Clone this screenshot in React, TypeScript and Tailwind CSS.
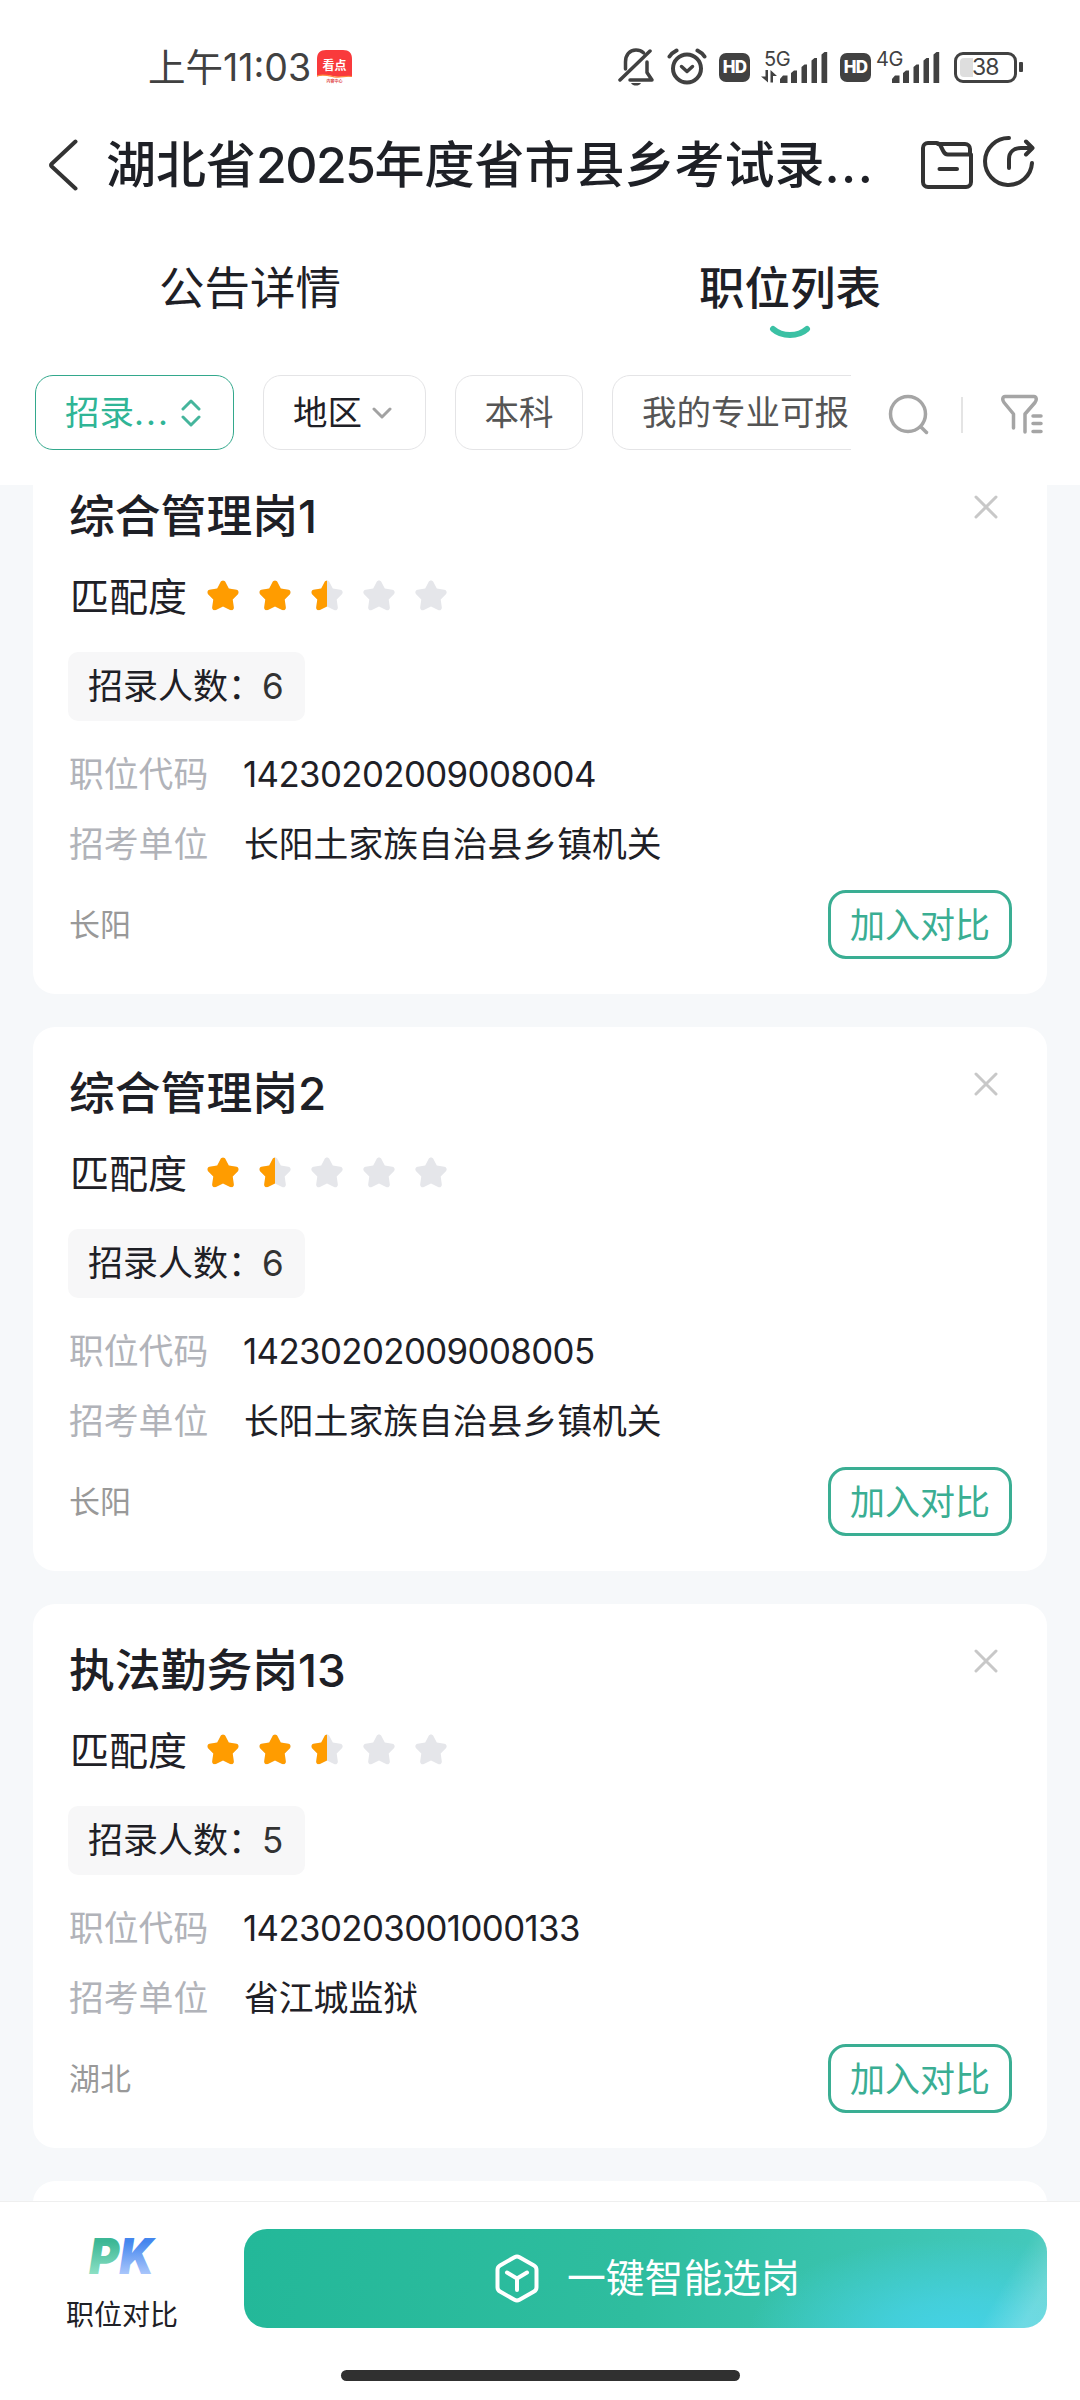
import clsx from "clsx";

type Job = {
	title: string;
	score: number;
	count: number;
	code: string;
	unit: string;
	area: string;
};

const JOBS: Job[] = [
	{
		title: "综合管理岗1",
		score: 2.5,
		count: 6,
		code: "14230202009008004",
		unit: "长阳土家族自治县乡镇机关",
		area: "长阳",
	},
	{
		title: "综合管理岗2",
		score: 1.5,
		count: 6,
		code: "14230202009008005",
		unit: "长阳土家族自治县乡镇机关",
		area: "长阳",
	},
	{
		title: "执法勤务岗13",
		score: 2.5,
		count: 5,
		code: "14230203001000133",
		unit: "省江城监狱",
		area: "湖北",
	},
];

const STAR =
	"M16 .5c1 0 1.900 .5 2.400 1.500l3.400 6.600 7.600 1.200c2.200 .4 3 2.800 1.500 4.400l-5.200 5.400 1.100 7.600c.3 2.200-1.700 3.700-3.700 2.700L16 26.600l-7.100 3.300c-2 1-4-.5-3.700-2.700l1.100-7.600-5.200-5.400C-.4 12.600 .4 10.200 2.600 9.800l7.600-1.200L13.600 2c.5-1 1.400-1.500 2.400-1.500z";

function Star({ fill }: { fill: number }) {
	return (
		<svg width="32" height="32" viewBox="0 0 32 32">
			<path d={STAR} fill="#e5e6ea" />
			{fill > 0 && (
				<path
					d={STAR}
					fill="#ff9c00"
					style={{ clipPath: `inset(0 ${(1 - fill) * 100}% 0 0)` }}
				/>
			)}
		</svg>
	);
}

function Signal() {
	return (
		<svg width="48" height="31" viewBox="0 0 48 31" fill="#414141">
			<path d="M0 31v-4l3-3.500h4.500V31zM11 31V21l3-2.500h3V31zM21.500 31V15l3-2.500h2.500V31zM31.500 31V8.500l3-2.500h2.500V31zM41.500 31V2.500L44.500 0h2.700v31z" />
		</svg>
	);
}

function HdBadge() {
	return (
		<span className="flex h-[29px] w-[31px] items-center justify-center rounded-[7px] bg-[#414141] text-[17px] leading-none font-extrabold tracking-[-0.8px] text-white">
			HD
		</span>
	);
}

function StatusBar() {
	return (
		<div className="flex h-[100px] items-end pl-[148px] text-[#414141]">
			<span className="mb-[7px] h-[50px] w-[162px] text-[37.5px] leading-[50px] whitespace-nowrap">
				上午11:03
			</span>
			<svg
				width="36"
				height="36"
				viewBox="0 0 36 36"
				className="mb-[14px] ml-[7px]"
			>
				<path
					d="M9 0h17c6 0 9 3 9 9v18c-6-2-10 1-17-.5C11 25 6 24 0 26.500V9c0-6 3-9 9-9z"
					fill="#f93a3c"
				/>
				<path
					d="M0 26c6-2 11-.5 17 .8 7 1.200 12-1.500 18-.3"
					stroke="#ff8a3c"
					strokeWidth="1.200"
					fill="none"
				/>
				<text x="17.500" y="19.500" textAnchor="middle" fontSize="12" fontWeight="700" fill="#fff">
					看点
				</text>
				<text x="17.500" y="33" textAnchor="middle" fontSize="4" fontWeight="700" fill="#e0494a">
					内容中心
				</text>
			</svg>
			<div className="mb-[14px] ml-auto flex h-[38px] items-center pr-[57px]">
				<svg
					width="36"
					height="38"
					viewBox="0 0 36 38"
					fill="none"
					stroke="#414141"
					strokeWidth="3.500"
					strokeLinecap="round"
					strokeLinejoin="round"
				>
					<path d="M7.500 21v-7c0-7 4-12 10.500-12 3 0 5.500 1 7.500 2.800" />
					<path d="M32 3 2 32" />
					<path d="M12 32h22l-5-7.500V14" />
					<path d="M13 35h10c-1 2-3 2.500-5 2.500s-4-.5-5-2.500z" fill="#414141" stroke="none" />
				</svg>
				<svg
					width="40"
					height="38"
					viewBox="0 0 40 38"
					fill="none"
					stroke="#414141"
					strokeWidth="4"
					strokeLinecap="round"
					strokeLinejoin="round"
					className="ml-[13px]"
				>
					<circle cx="20" cy="20.500" r="14" />
					<path d="m14.500 18.500 5.500 5 5.500-5" strokeWidth="3.500" />
					<path d="M2.500 8.500c2-3 4-4.500 7-6M37.500 8.500c-2-3-4-4.500-7-6" />
				</svg>
				<div className="ml-3">
					<HdBadge />
				</div>
				<div className="relative ml-[30px]">
					<Signal />
					<span className="absolute -top-[5px] -left-4 text-[20px] leading-[24px] tracking-[-0.3px]">
						5G
					</span>
					<svg
						width="17"
						height="13"
						viewBox="0 0 17 13"
						fill="#414141"
						className="absolute bottom-0 -left-[19px]"
					>
						<path d="M4.500 0H7v12.500L0 6.500h4.500zM9.500 0l6.500 6h-4v6.500H9.500z" />
					</svg>
				</div>
				<div className="ml-[12px]">
					<HdBadge />
				</div>
				<div className="relative ml-[21px]">
					<Signal />
					<span className="absolute -top-[5px] -left-4 text-[20px] leading-[24px] tracking-[-0.3px]">
						4G
					</span>
				</div>
				<div className="ml-[14px] flex h-[31px] w-[63px] items-center rounded-[9px] border-[3px] border-[#414141] pl-[3px]">
					<span className="h-[19px] w-[13px] rounded-l-[4px] bg-[#dedede]" />
					<span className="-ml-[1px] text-[23px] leading-none tracking-[-1px]">
						38
					</span>
				</div>
				<span className="ml-[2px] h-[10px] w-1 rounded-[1px] bg-[#414141]" />
			</div>
		</div>
	);
}

function TitleBar() {
	return (
		<div className="mt-[27px] flex h-[76px] items-center pl-[49px]">
			<svg
				width="29"
				height="52"
				viewBox="0 0 29 52"
				fill="none"
				stroke="#333"
				strokeWidth="4"
				strokeLinecap="round"
				strokeLinejoin="round"
			>
				<path d="M26.500 2.500 2.500 25a1.500 1.500 0 0 0 0 2.200L26.500 49.500" />
			</svg>
			<h1 className="ml-[28px] w-[770px] text-[50px] leading-[76px] font-medium whitespace-nowrap">
				湖北省
				<span className="tracking-[-1.600px]">2025</span>
				年度省市县乡考试录
				<span className="tracking-[1.500px]">...</span>
			</h1>
			<svg
				width="54"
				height="50"
				viewBox="0 0 54 50"
				fill="none"
				stroke="#333"
				strokeWidth="4"
				strokeLinecap="round"
				strokeLinejoin="round"
				className="ml-[44px]"
			>
				<path d="M51 14.500V42a5 5 0 0 1-5 5H8a5 5 0 0 1-5-5V8a5 5 0 0 1 5-5h8.500c2 0 3 1 4.200 3l2.500 5c1 2 2.200 3.500 4.500 3.500z" />
				<path d="M18 4h27a5 5 0 0 1 5 5v4" />
				<path d="M19.500 29H37" />
			</svg>
			<svg
				width="52"
				height="52"
				viewBox="0 0 52 52"
				fill="none"
				stroke="#333"
				strokeWidth="4"
				strokeLinecap="round"
				strokeLinejoin="round"
				className="mb-2 ml-[9px]"
			>
				<path d="M26 3A23.500 23.500 0 1 0 49 28" />
				<path d="M26 33V24c0-7 5-11 12-11h10" />
				<path d="m43 6.500 6.500 6.500-6.500 6.500" />
			</svg>
		</div>
	);
}

function Tabs() {
	return (
		<div className="mt-[46px] grid grid-cols-2 text-center text-[45.500px] leading-[80px]">
			<div className="pr-10">公告详情</div>
			<div className="relative pr-10 font-medium">
				职位列表
				<svg
					width="42"
					height="14"
					viewBox="0 0 42 14"
					className="absolute top-[76px] left-[229px]"
				>
					<path
						d="M4 4c9 8 25 8 34 0"
						fill="none"
						stroke="#3bc1a4"
						strokeWidth="6"
						strokeLinecap="round"
					/>
				</svg>
			</div>
		</div>
	);
}

function Filters() {
	const chip =
		"flex h-[75px] shrink-0 items-center rounded-[18px] border text-[34.5px] whitespace-nowrap";
	return (
		<div className="mt-[46px] flex items-center pl-[35px]">
			<div className="flex w-[816px] gap-[29px] overflow-hidden">
				<div className={clsx(chip, "w-[199px] border-[#33a88c] pl-[29px] text-[#2fb596]")}>
					招录
					<span className="tracking-[2px]">...</span>
					<svg
						width="20"
						height="28"
						viewBox="0 0 20 28"
						fill="none"
						stroke="#45b59c"
						strokeWidth="3"
						strokeLinecap="round"
						strokeLinejoin="round"
						className="ml-[11px]"
					>
						<path d="m2 10 8-8 8 8M2 18l8 8 8-8" />
					</svg>
				</div>
				<div className={clsx(chip, "w-[163px] border-[#e4e4e6] pl-[29px]")}>
					地区
					<svg
						width="20"
						height="12"
						viewBox="0 0 20 12"
						fill="none"
						stroke="#a2a2a2"
						strokeWidth="3"
						strokeLinecap="round"
						strokeLinejoin="round"
						className="ml-[10px]"
					>
						<path d="m2 2 8 8 8-8" />
					</svg>
				</div>
				<div className={clsx(chip, "w-[128px] justify-center border-[#e4e4e6] text-[#555]")}>
					本科
				</div>
				<div className={clsx(chip, "w-[280px] border-[#e4e4e6] pl-[29px] text-[#555]")}>
					我的专业可报
				</div>
			</div>
			<svg
				width="42"
				height="42"
				viewBox="0 0 42 42"
				fill="none"
				stroke="#a5a5a5"
				strokeWidth="3.500"
				strokeLinecap="round"
				className="mt-1 ml-[37px]"
			>
				<circle cx="20" cy="20" r="17.500" />
				<path d="m33 33 5.500 5.500" />
			</svg>
			<span className="mt-1 ml-[31px] h-9 w-[2px] bg-[#e4e4e4]" />
			<svg
				width="42"
				height="41"
				viewBox="0 0 42 41"
				fill="none"
				stroke="#a5a5a5"
				strokeWidth="3.500"
				strokeLinecap="round"
				strokeLinejoin="round"
				className="mt-1 ml-[38px]"
			>
				<path d="M12.500 34V20L3 8.500C1 6 1.500 2.500 4 2.500h29c2.500 0 3 3.500 1 6L24 20v18" />
				<path d="M32 22h8M32 29.500h8M32 37.500h8" />
			</svg>
		</div>
	);
}

function JobCard({ job }: { job: Job }) {
	return (
		<div className="h-[544px] shrink-0 rounded-[22px] bg-white pt-[37px] pr-[35px] pl-[35px]">
			<div className="flex h-[60px] justify-between">
				<h2 className="pl-[1px] text-[45.800px] leading-[60px] font-medium">{job.title}</h2>
				<svg
					width="24"
					height="24"
					viewBox="0 0 24 24"
					stroke="#c8c8c8"
					strokeWidth="3"
					strokeLinecap="round"
					className="mt-[8px] mr-[14px]"
				>
					<path d="M2 2l20 20M22 2 2 22" />
				</svg>
			</div>

			<div className="mt-[25px] flex h-[50px] items-center pl-[2px] text-[39px] leading-[50px]">
				匹配度
				<div className="mb-[3px] ml-[20px] flex gap-5">
					{[0, 1, 2, 3, 4].map((i) => (
						<Star key={i} fill={Math.min(1, Math.max(0, job.score - i))} />
					))}
				</div>
			</div>

			<div className="mt-[30px] flex h-[69px] w-[237px] items-center rounded-[10px] bg-[#f7f7f8] pl-[20px] text-[35px]">
				招录人数：
				<span className="-ml-[1px] text-[#333]">{job.count}</span>
			</div>

			<div className="mt-[28px] flex h-[50px] pl-[1px] text-[34.800px] leading-[50px]">
				<span className="w-[175px] text-[#b1b3b9]">职位代码</span>
				<span className="-ml-[1px] tracking-[-0.6px]">{job.code}</span>
			</div>
			<div className="mt-5 flex h-[50px] pl-[1px] text-[34.800px] leading-[50px]">
				<span className="w-[175px] text-[#b1b3b9]">招考单位</span>
				<span>{job.unit}</span>
			</div>

			<div className="mt-[21px] flex items-center justify-between">
				<span className="pt-[2px] pl-[1px] text-[31px] text-[#999]">{job.area}</span>
				<button className="h-[69px] w-[184px] rounded-[18px] border-[3px] border-[#3aae93] text-[35px] leading-[62px] text-[#3aae93]">
					加入对比
				</button>
			</div>
		</div>
	);
}

function BottomBar() {
	return (
		<div className="h-[199px] border-t border-[#efefef] bg-white">
			<div className="flex h-[126px] pt-[27px]">
				<div className="flex w-[244px] flex-col items-center">
					<svg width="84" height="60" viewBox="0 0 84 60" className="-mt-[4px] shrink-0">
						<defs>
							<linearGradient id="pk-green" x1="0" y1="12" x2="0" y2="48" gradientUnits="userSpaceOnUse">
								<stop offset="0.100" stopColor="#3cb795" />
								<stop offset="1" stopColor="#8ce0c4" />
							</linearGradient>
							<linearGradient id="pk-blue" x1="0" y1="12" x2="0" y2="48" gradientUnits="userSpaceOnUse">
								<stop offset="0.100" stopColor="#4486ee" />
								<stop offset="1" stopColor="#a9c6fb" />
							</linearGradient>
						</defs>
						<g transform="translate(9 1) scale(0.92 1)" fontSize="50" fontWeight="900" fontStyle="italic">
							<text x="0" y="48" fill="url(#pk-green)">
								P<tspan fill="url(#pk-blue)">K</tspan>
							</text>
						</g>
					</svg>
					<span className="mt-[10px] shrink-0 text-[28px] leading-[40px]">职位对比</span>
				</div>
				<button className="flex h-[99px] w-[803px] items-center rounded-[23px] bg-[linear-gradient(120deg,transparent_92%,rgba(255,255,255,0.22)_97%),radial-gradient(ellipse_210px_95px_at_89%_105%,#45d2e6_0%,rgba(69,210,230,0.750)_35%,transparent_100%),linear-gradient(100deg,#23b899_0%,#2fbd9f_50%,#45c9bd_100%)] pl-[251px] text-[38.800px] text-white">
					<svg
						width="44"
						height="49"
						viewBox="0 0 44 49"
						fill="none"
						stroke="#fff"
						strokeWidth="4"
						strokeLinecap="round"
						strokeLinejoin="round"
					>
						<path d="M19.500 3.200a5 5 0 0 1 5 0l14.500 8.300a5 5 0 0 1 2.500 4.300v17.400a5 5 0 0 1-2.500 4.300L24.500 45.800a5 5 0 0 1-5 0L5 37.500a5 5 0 0 1-2.500-4.300V15.800A5 5 0 0 1 5 11.500z" />
						<path d="m12 18.500 10 6 10-6M22 24.500V36" />
					</svg>
					<span className="ml-[28px]">一键智能选岗</span>
				</button>
			</div>
			<div className="mx-auto mt-[42px] h-[11px] w-[399px] rounded-full bg-[#303030]" />
		</div>
	);
}

export default function App() {
	return (
		<div className="flex h-[2400px] w-[1080px] flex-col overflow-hidden bg-[#f6f8fa] font-[Inter,'Noto_Sans_CJK_SC',sans-serif] text-[#1e2026]">
			<div className="z-10 h-[485px] shrink-0 bg-white">
				<StatusBar />
				<TitleBar />
				<Tabs />
				<Filters />
			</div>

			{/* list is scrolled a little, the first card sits under the header */}
			<div className="-mt-[35px] flex h-[1751px] shrink-0 flex-col gap-[33px] overflow-hidden px-[33px]">
				{JOBS.map((job) => (
					<JobCard key={job.code} job={job} />
				))}
				<div className="h-[544px] shrink-0 rounded-[22px] bg-white" />
			</div>

			<BottomBar />
		</div>
	);
}
